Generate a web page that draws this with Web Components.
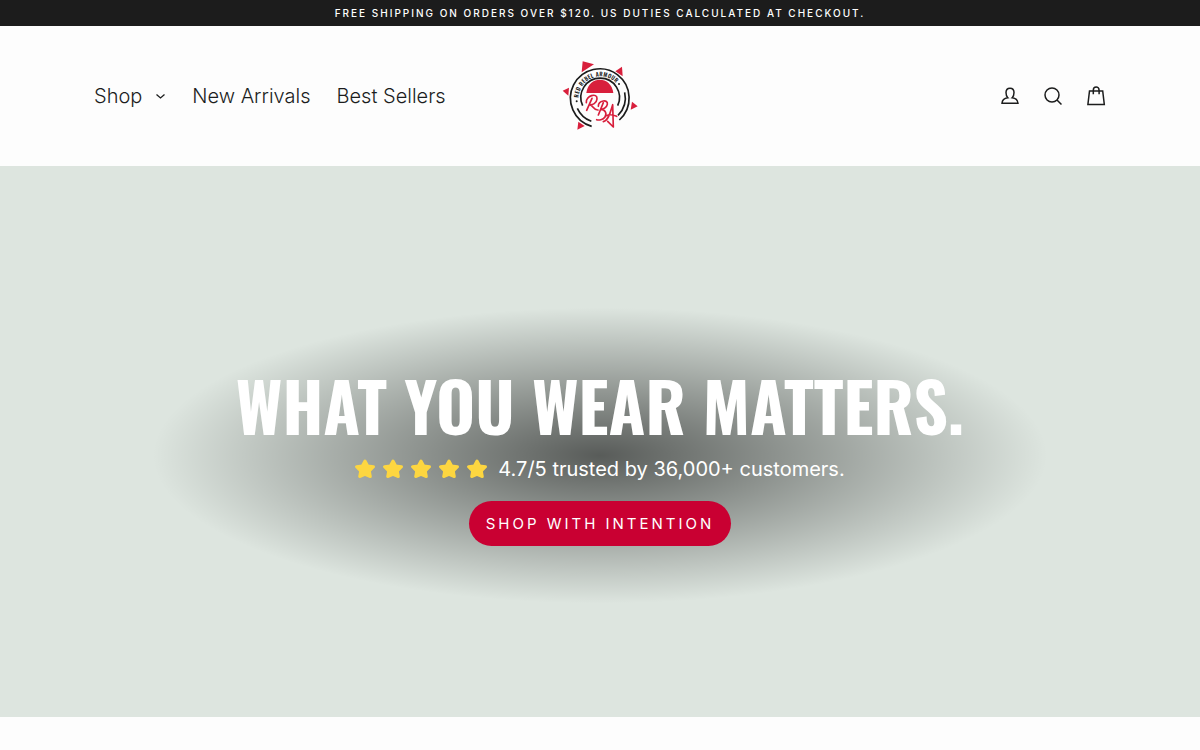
<!DOCTYPE html>
<html lang="en">
<head>
<meta charset="utf-8">
<meta name="viewport" content="width=device-width,initial-scale=1">
<title>Red Rebel Armour</title>
<style>
  body{margin:0;background:#fdfdfd;color:#1c1d1d;font-family:Inter,"Liberation Sans",sans-serif}
</style>
</head>
<body>
<announcement-bar>Free shipping on orders over $120. US duties calculated at checkout.</announcement-bar>
<site-header>
  <nav-link slot="nav" href="#shop" menu>Shop</nav-link>
  <nav-link slot="nav" href="#new">New Arrivals</nav-link>
  <nav-link slot="nav" href="#best">Best Sellers</nav-link>
  <brand-logo slot="logo"></brand-logo>
  <icon-link slot="tools" icon="user" href="#account" label="Log in"></icon-link>
  <icon-link slot="tools" icon="search" href="#search" label="Search"></icon-link>
  <icon-link slot="tools" icon="bag" href="#cart" label="Cart"></icon-link>
</site-header>
<main>
  <hero-banner>
    <span slot="title">What you wear matters.</span>
    <star-rating slot="rating" stars="5">4.7/5 trusted by 36,000+ customers.</star-rating>
    <pill-link slot="action" href="#collection">Shop with intention</pill-link>
  </hero-banner>
</main>

<script>
class AnnouncementBar extends HTMLElement {
  constructor(){
    super();
    this.attachShadow({mode:'open'}).innerHTML = `
      <style>
        :host{display:block;background:#1c1c1c;color:#fff;padding:5px 16px;text-align:center}
        p{margin:0;font-size:10px;line-height:16px;font-weight:500;letter-spacing:2px;text-transform:uppercase}
      </style>
      <p><slot></slot></p>
    `;
  }
}

class SiteHeader extends HTMLElement {
  constructor(){
    super();
    this.attachShadow({mode:'open'}).innerHTML = `
      <style>
        :host{display:block}
        header{display:grid;grid-template-columns:1fr auto 1fr;align-items:center;max-width:1500px;margin:0 auto;padding:32px 94px}
        nav{display:flex;gap:26px;align-items:center}
        .tools{display:flex;gap:23px;justify-content:flex-end}
      </style>
      <header>
        <nav aria-label="Main"><slot name="nav"></slot></nav>
        <slot name="logo"></slot>
        <div class="tools"><slot name="tools"></slot></div>
      </header>
    `;
  }
}

class NavLink extends HTMLElement {
  constructor(){
    super();
    const s = this.attachShadow({mode:'open'});
    s.innerHTML = `
      <style>
        :host{display:block}
        a{display:flex;align-items:center;gap:13px;color:inherit;text-decoration:none;font-size:20px;line-height:28px;font-weight:300;white-space:nowrap}
        svg{display:none;width:11px;height:8px;fill:none;stroke:currentColor}
        :host([menu]) svg{display:block}
      </style>
      <a><slot></slot><svg viewBox="0 0 11 8" aria-hidden="true"><path d="M1.5 2.5 5.5 6l4-3.5" stroke-width="1.3"/></svg></a>
    `;
    s.querySelector('a').href = this.getAttribute('href') || '#';
  }
}

class BrandLogo extends HTMLElement {
  constructor(){
    super();
    this.attachShadow({mode:'open'}).innerHTML = `
      <style>
        :host{display:block}
        a{display:block}
        svg{display:block;width:76px;height:76px}
        text{font:600 17px Oswald,"Liberation Sans",sans-serif;letter-spacing:1px;fill:#1c1c1c}
      </style>
      <a href="#home" aria-label="Red Rebel Armour">
        <svg viewBox="36 23 228 228">
          <g fill="#d81f3c">
            <path d="M98 33l34 9-37 24z"/>
            <path d="M216 49l2 29-22-15z"/>
            <path d="M57 112l-2 24-17-15z"/>
            <path d="M246 154l17 14-21 10z"/>
            <path d="M85 214l19 13-22 11z"/>
            <path d="M109 128C115 75 184 75 190 128z"/>
          </g>
          <g fill="none" stroke="#1c1c1c" stroke-width="5">
            <path d="M125 228A88 88 0 1 1 208 209"/>
            <path d="M98 166A58 58 0 1 1 203 166"/>
            <path d="M82 174A75 75 0 0 0 124 213"/>
            <path d="M224 126A75 75 0 0 1 204 195"/>
          </g>
          <circle cx="80" cy="153" r="3" fill="#1c1c1c"/>
          <circle cx="207" cy="101" r="3" fill="#1c1c1c"/>
          <path id="ring" d="M86 142A65 65 0 0 1 208 112" fill="none"/>
          <text><textPath href="#ring">RED REBEL ARMOUR</textPath></text>
          <g fill="none" stroke="#d81f3c" stroke-width="5" stroke-linecap="round" stroke-linejoin="round">
            <path d="M126 144L110 180M109 157C107 136 143 125 141 146C140 159 127 164 119 163C130 165 130 180 144 179"/>
            <path d="M160 157L145 194M145 168C145 149 175 146 172 162C170 173 158 177 152 177C165 177 172 189 165 200C159 209 146 210 140 208"/>
            <path d="M160 214C177 210 182 181 188 163L190 230L173 213M170 196C178 191 190 194 200 198"/>
          </g>
        </svg>
      </a>
    `;
  }
}

const ICONS = {
  user: '<path d="M10 2.200c-2.700 0-4 1.800-4 4.400 0 2.300.6 4.200 1.800 5.200-3.200.5-5.600 2-5.800 5.400h16c-.2-3.400-2.600-4.900-5.800-5.400 1.200-1 1.800-2.900 1.800-5.200 0-2.600-1.300-4.400-4-4.400z"/>',
  search: '<circle cx="9" cy="9" r="7"/><path d="M14 14l4.500 4.500"/>',
  bag: '<path d="M3.500 5h13.200l1.600 13.400H1.900zM7.300 8.300V4.300c0-4.300 5.800-4.300 5.800 0v4"/>'
};

class IconLink extends HTMLElement {
  constructor(){
    super();
    const s = this.attachShadow({mode:'open'});
    s.innerHTML = `
      <style>
        :host{display:block}
        a{display:block;color:inherit}
        svg{display:block;width:20px;height:20px;fill:none;stroke:currentColor;stroke-width:1.5;overflow:visible}
      </style>
      <a><svg viewBox="0 0 20 20" aria-hidden="true">${ICONS[this.getAttribute('icon')] || ''}</svg></a>
    `;
    const a = s.querySelector('a');
    a.href = this.getAttribute('href') || '#';
    a.setAttribute('aria-label', this.getAttribute('label') || '');
  }
}

class HeroBanner extends HTMLElement {
  constructor(){
    super();
    this.attachShadow({mode:'open'}).innerHTML = `
      <style>
        :host{display:block;background:#dde5df;color:#fff;padding:140px 24px 112px}
        .content{display:flex;flex-direction:column;align-items:center;box-sizing:border-box;max-width:904px;margin:0 auto;padding:59px 0;text-align:center;
          background:radial-gradient(rgba(0,0,0,.6),transparent 70%)}
        h1{margin:0 0 8px;font:700 67px/80px Oswald,"Roboto Condensed","Liberation Sans",sans-serif;text-transform:uppercase}
        slot[name="action"]{display:block;margin-top:16px}
      </style>
      <div class="content">
        <h1><slot name="title"></slot></h1>
        <slot name="rating"></slot>
        <slot name="action"></slot>
      </div>
    `;
  }
}

class StarRating extends HTMLElement {
  constructor(){
    super();
    const s = this.attachShadow({mode:'open'});
    const star = '<svg viewBox="0 0 20 20" aria-hidden="true"><path d="M10 2l2.700 5 5.800.8-4.200 4.200 1 5.500-5.300-2.100-5.300 2.100 1-5.500L1.500 7.800 7.300 7z"/></svg>';
    const n = parseInt(this.getAttribute('stars')||"5",10);
    s.innerHTML = `
      <style>
        :host{display:flex;align-items:center;gap:11px;font-size:20px;line-height:32px}
        .stars{display:flex;gap:8px}
        svg{display:block;width:20px;height:20px;fill:#fdd640;stroke:#fdd640;stroke-width:3;stroke-linejoin:round;overflow:visible}
      </style>
      <span class="stars">${star.repeat(n)}</span>
      <span><slot></slot></span>
    `;
  }
}

class PillLink extends HTMLElement {
  constructor(){
    super();
    const s = this.attachShadow({mode:'open'});
    s.innerHTML = `
      <style>
        :host{display:block}
        a{display:block;background:#c90032;color:#fff;border-radius:24px;padding:10px 17px;font-size:15px;line-height:25px;letter-spacing:3px;text-transform:uppercase;text-decoration:none}
      </style>
      <a><slot></slot></a>
    `;
    s.querySelector('a').href = this.getAttribute('href') || '#';
  }
}

customElements.define('announcement-bar', AnnouncementBar);
customElements.define('site-header', SiteHeader);
customElements.define('nav-link', NavLink);
customElements.define('brand-logo', BrandLogo);
customElements.define('icon-link', IconLink);
customElements.define('hero-banner', HeroBanner);
customElements.define('star-rating', StarRating);
customElements.define('pill-link', PillLink);
</script>
</body>
</html>
